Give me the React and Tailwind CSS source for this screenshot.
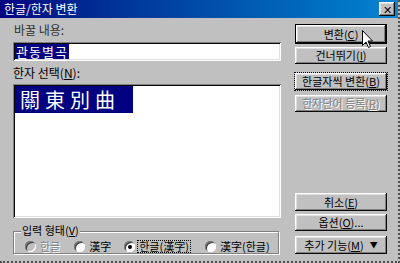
import React from "react";

const font = { fontFamily: '"Noto Sans CJK KR", "Noto Sans", sans-serif' };

const raised =
  "shadow-[inset_-1px_-1px_#0a0a0a,inset_1px_1px_#ffffff,inset_-2px_-2px_#808080,inset_2px_2px_#dfdfdf]";
const sunken =
  "shadow-[inset_1px_1px_#808080,inset_-1px_-1px_#ffffff,inset_2px_2px_#0a0a0a,inset_-2px_-2px_#dfdfdf]";

function Btn({ children, className = "", disabled, isDefault }) {
  return (
    <div
      className={`flex items-center justify-center bg-[#c0c0c0] text-[11px] leading-none whitespace-nowrap ${
        isDefault ? "border border-black" : ""
      } ${disabled ? "text-[#808080] [text-shadow:1px_1px_#ffffff]" : "text-black"} ${className}`}
    >
      <div className={`w-full h-full flex items-center justify-center ${raised}`}>
        {children}
      </div>
    </div>
  );
}

function Radio({ label, checked, disabled, focus, className = "" }) {
  return (
    <div className={`flex items-center gap-[3px] shrink-0 whitespace-nowrap ${className}`}>
      <span
        className={`w-[11px] h-[11px] rounded-full flex items-center justify-center shadow-[inset_1px_1px_#808080,inset_-1px_-1px_#ffffff,inset_2px_2px_#404040] ${
          disabled ? "bg-[#c0c0c0]" : "bg-white"
        }`}
      >
        {checked && <span className="w-[4px] h-[4px] rounded-full bg-black" />}
      </span>
      <span
        className={`text-[11px] leading-[11px] px-[1px] ${
          focus ? "outline outline-1 outline-dotted outline-black" : ""
        } ${disabled ? "text-[#808080] [text-shadow:1px_1px_#ffffff]" : "text-black"}`}
      >
        {label}
      </span>
    </div>
  );
}

function Cursor() {
  return (
    <svg
      className="absolute left-[362px] top-[30px]"
      width="12"
      height="19"
      viewBox="0 0 12 19"
    >
      <path
        d="M0.5 0.5 L0.5 15.5 L4 12 L6.5 17.5 L8.5 16.5 L6 11 L10.5 11 Z"
        fill="#ffffff"
        stroke="#000000"
        strokeWidth="1"
      />
    </svg>
  );
}

export default function App() {
  return (
    <div
      className="relative w-[400px] h-[263px] bg-[#c0c0c0] overflow-hidden border-r-2 border-b-2 border-dotted border-[#505050]"
      style={font}
    >
      <div className="h-[18px] flex items-center justify-between bg-gradient-to-r from-[#000080] to-[#1084d0] pl-[4px] pr-[3px]">
        <span className="text-white text-[12px] leading-none">한글/한자 변환</span>
        <div className={`w-[16px] h-[14px] bg-[#c0c0c0] flex items-center justify-center text-[11px] leading-none text-black ${raised}`}>
          ✕
        </div>
      </div>

      <div className="flex">
        <div className="w-[281px] pl-[13px] pt-[5px] flex flex-col">
          <div className="h-[14px] text-[12px] leading-[14px] text-[#303030] pl-[1px]">바꿀 내용:</div>
          <div className={`mt-[5px] h-[19px] bg-white flex items-center pl-[2px] ${sunken}`}>
            <span className="bg-[#000080] text-white text-[13px] leading-[15px] tracking-[1px] px-[1px]">관동별곡</span>
          </div>
          <div className="mt-[5px] h-[14px] text-[12px] leading-[14px] text-black">
            한자 선택(<span className="underline">N</span>):
          </div>
          <div className={`mt-[4px] h-[134px] bg-white p-[2px] ${sunken}`}>
            <div className="w-[118px] h-[27px] bg-[#000080] text-white text-[20px] leading-[27px] tracking-[5px] pl-[5px]">
              關東別曲
            </div>
          </div>
          <div className="mt-[13px] w-[266px] h-[23px] border border-[#808080] shadow-[inset_1px_1px_#ffffff,1px_1px_#ffffff] flex flex-col">
            <span className="-mt-[7px] ml-[7px] w-fit bg-[#c0c0c0] px-[1px] text-[11px] leading-[11px] text-black whitespace-nowrap">
              입력 형태(<span className="underline">V</span>)
            </span>
            <div className="flex items-center h-[11px] mt-[5px] pl-[11px]">
              <Radio label="한글" disabled />
              <Radio label="漢字" className="ml-[13px]" />
              <Radio label="한글(漢字)" checked focus className="ml-[12px]" />
              <Radio label="漢字(한글)" className="ml-[15px]" />
            </div>
          </div>
        </div>

        <div className="ml-[14px] w-[92px] pt-[6px] flex flex-col h-[243px]">
          <Btn isDefault className="h-[20px]">
            변환(<span className="underline">C</span>)
          </Btn>
          <Btn className="mt-[3px] h-[17px]">
            건너뛰기(<span className="underline">I</span>)
          </Btn>
          <Btn className="mt-[9px] h-[17px] outline outline-1 outline-dotted outline-black">
            한글자씩 변환(<span className="underline">B</span>)
          </Btn>
          <Btn disabled className="mt-[5px] h-[17px]">
            한자단어 등록(<span className="underline">R</span>)
          </Btn>
          <div className="flex-1" />
          <Btn className="h-[18px]">
            취소(<span className="underline">E</span>)
          </Btn>
          <Btn className="mt-[3px] h-[17px]">
            옵션(<span className="underline">O</span>)...
          </Btn>
          <Btn className="mt-[5px] h-[18px] mb-[7px]">
            추가 기능(<span className="underline">M</span>)
            <span className="ml-[6px] text-[8px]">▼</span>
          </Btn>
        </div>
      </div>
      <Cursor />
    </div>
  );
}
